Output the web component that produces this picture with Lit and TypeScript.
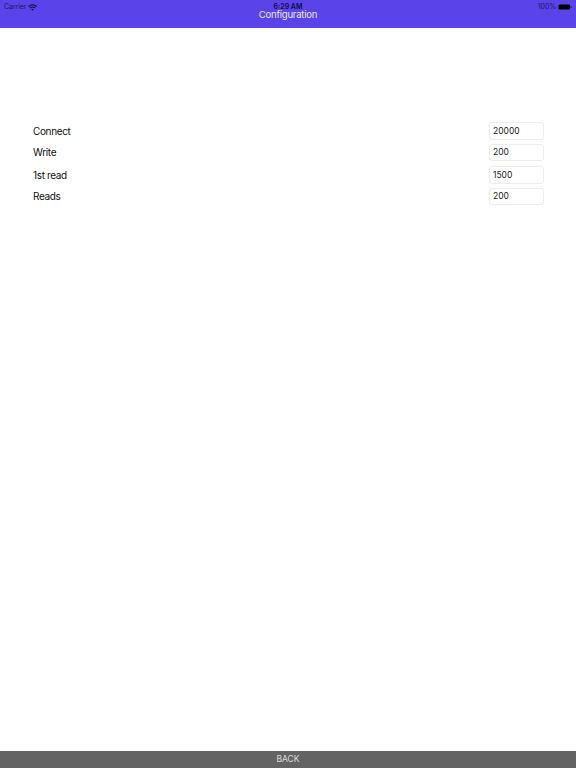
import { LitElement, html, css } from "lit";
import { customElement } from "lit/decorators.js";

const rows: { label: string; value: string; cls: string }[] = [
  { label: "Connect", value: "20000", cls: "" },
  { label: "Write", value: "200", cls: "" },
  { label: "1st read", value: "1500", cls: "gap" },
  { label: "Reads", value: "200", cls: "" },
];

@customElement("app-root")
export class AppRoot extends LitElement {
  static styles = css`
    :host {
      display: flex;
      flex-direction: column;
      width: 576px;
      height: 768px;
      background: #fff;
      font-family: Inter, "Liberation Sans", Arial, sans-serif;
      color: #000;
      overflow: hidden;
    }
    .header {
      height: 28px;
      flex: none;
      background: #5a43e8;
      display: flex;
      flex-direction: column;
      box-sizing: border-box;
      padding-top: 3.5px;
    }
    .status {
      height: 6px;
      padding: 0 4px;
      display: grid;
      grid-template-columns: 1fr auto 1fr;
      align-items: center;
      font-size: 7px;
      line-height: 6px;
      letter-spacing: -0.1px;
      color: #1f1760;
    }
    .left { display: flex; align-items: center; gap: 2px; }
    .time { font-weight: 600; color: #120c40; letter-spacing: 0; }
    .right { display: flex; align-items: center; justify-content: flex-end; gap: 2px; }
    .batt { display: block; }
    .title {
      text-align: center;
      font-size: 9.6px;
      line-height: 10px;
      letter-spacing: -0.25px;
      color: #e8e5fd;
    }
    .main {
      flex: 1;
      padding: 94px 32px 0 33px;
      display: flex;
      flex-direction: column;
      gap: 4px;
    }
    .row {
      display: flex;
      align-items: center;
      justify-content: space-between;
      height: 17.5px;
    }
    .row.gap { margin-top: 1px; }
    .label { font-size: 10px; letter-spacing: -0.35px; color: #111; }
    .field {
      box-sizing: border-box;
      width: 55px;
      height: 17.5px;
      border: 1px solid #ededed;
      border-radius: 3px;
      padding: 0 3px;
      display: flex;
      align-items: center;
      font-size: 8.5px;
      color: #222;
    }
    .footer {
      flex: none;
      height: 17px;
      background: #636363;
      color: #dcdcdc;
      font-size: 8.5px;
      line-height: 17px;
      text-align: center;
    }
  `;

  render() {
    return html`
      <div class="header">
        <div class="status">
          <div class="left">
            <span>Carrier</span>
            <svg width="9" height="7" viewBox="0 0 18 14" fill="none" stroke="#120c40" stroke-width="2.2">
              <path d="M1 5 C5.5 0.5 12.5 0.5 17 5" />
              <path d="M4 8 C7 5.5 11 5.5 14 8" />
              <path d="M9 13.5 L6.5 10.6 C8 9.6 10 9.6 11.5 10.6 Z" fill="#120c40" stroke="none" />
            </svg>
          </div>
          <span class="time">6:29 AM</span>
          <div class="right">
            <span>100%</span>
            <svg class="batt" width="14" height="6" viewBox="0 0 14 6">
              <rect x="0.5" y="0.5" width="11.5" height="5" rx="1" fill="#000" />
              <rect x="12.4" y="2" width="1" height="2" fill="#1b1450" />
            </svg>
          </div>
        </div>
        <div class="title">Configuration</div>
      </div>
      <div class="main">
        ${rows.map(
          (r) => html`<div class="row ${r.cls}">
            <span class="label">${r.label}</span>
            <div class="field">${r.value}</div>
          </div>`
        )}
      </div>
      <div class="footer">BACK</div>
    `;
  }
}
